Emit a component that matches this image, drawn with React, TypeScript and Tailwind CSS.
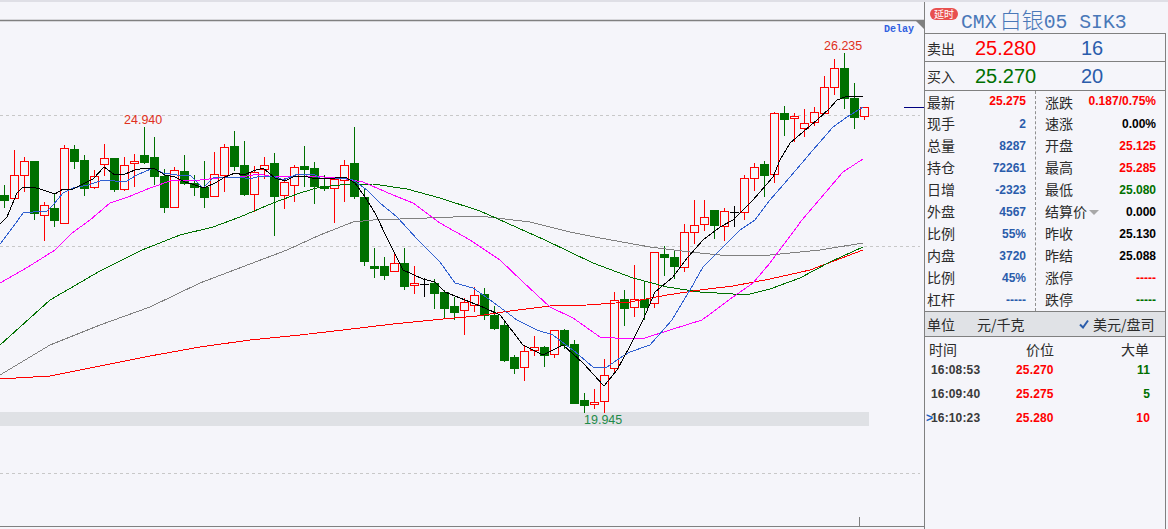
const RED = '#ff0000';
const GREEN = '#007000';

// type, high, body top, body bottom, low - one candle every 10px starting at x=4
type Candle = ['r' | 'g' | 'k', number, number, number, number];

const candles: Candle[] = [
  ['g', 185, 195, 200, 208], ['r', 150, 175, 198, 198], ['r', 157, 161, 175, 192], ['g', 161, 161, 213, 220],
  ['r', 202, 205, 215, 241], ['g', 193, 208, 220, 227], ['r', 145, 148, 223, 224], ['g', 145, 149, 161, 169],
  ['g', 155, 160, 188, 196], ['r', 170, 176, 187, 189], ['r', 144, 158, 164, 176], ['g', 158, 158, 189, 192],
  ['r', 157, 165, 189, 191], ['r', 154, 161, 163, 187], ['g', 127, 155, 162, 164], ['g', 137, 157, 176, 185],
  ['g', 169, 176, 207, 213], ['r', 167, 170, 207, 207], ['g', 155, 171, 183, 185], ['g', 175, 183, 187, 196],
  ['g', 161, 187, 197, 208], ['r', 152, 174, 196, 196], ['r', 144, 147, 175, 192], ['g', 131, 146, 166, 171],
  ['g', 141, 165, 194, 196], ['r', 166, 172, 194, 212], ['r', 157, 165, 169, 179], ['g', 153, 163, 196, 236],
  ['r', 178, 182, 195, 209], ['r', 165, 167, 185, 202], ['g', 146, 166, 169, 187], ['g', 162, 168, 186, 204],
  ['g', 175, 186, 188, 191], ['r', 178, 179, 188, 223], ['r', 160, 165, 180, 202], ['g', 127, 163, 196, 199],
  ['g', 188, 197, 261, 266], ['g', 248, 266, 268, 278], ['g', 257, 266, 275, 280], ['r', 252, 263, 271, 272],
  ['g', 248, 263, 286, 290], ['r', 266, 283, 285, 294], ['k', 278, 284, 284, 297], ['g', 279, 283, 293, 309],
  ['g', 290, 292, 308, 319], ['g', 297, 306, 312, 320], ['r', 298, 302, 310, 335], ['r', 287, 295, 305, 312],
  ['g', 288, 294, 315, 320], ['g', 306, 315, 328, 330], ['g', 322, 325, 360, 362], ['g', 355, 357, 368, 374],
  ['r', 345, 351, 367, 381], ['r', 336, 347, 350, 356], ['g', 346, 347, 355, 367], ['r', 330, 330, 354, 358],
  ['g', 329, 330, 345, 349], ['g', 340, 344, 403, 404], ['g', 393, 400, 405, 413], ['r', 389, 402, 404, 409],
  ['r', 359, 375, 401, 413], ['r', 292, 300, 368, 373], ['g', 290, 299, 308, 326], ['r', 265, 299, 307, 317],
  ['g', 282, 299, 307, 320], ['r', 252, 252, 303, 308], ['g', 246, 254, 257, 276], ['g', 251, 257, 266, 279],
  ['r', 224, 232, 267, 272], ['r', 200, 225, 232, 244], ['r', 200, 217, 224, 231], ['g', 210, 210, 225, 239],
  ['r', 208, 211, 226, 241], ['k', 206, 212, 212, 227], ['r', 175, 178, 212, 220], ['r', 163, 167, 178, 191],
  ['g', 161, 164, 175, 197], ['r', 112, 113, 174, 183], ['g', 106, 113, 119, 136], ['r', 113, 116, 118, 142],
  ['r', 109, 123, 128, 137], ['r', 107, 112, 122, 126], ['r', 76, 87, 113, 113], ['r', 59, 68, 87, 95],
  ['g', 53, 68, 98, 109], ['g', 83, 98, 117, 129], ['r', 107, 107, 116, 120],
];

const ma5 = '0,224 7,217 17,193 23,187 33,187 43,190 55,194 63,189 73,189 83,184 93,179 104,167 115,175 125,174 135,170 145,168 155,169 165,175 175,177 185,182 195,185 204,188 215,183 225,177 235,173 244,175 253,171 263,168 275,178 285,181 295,176 305,176 315,179 325,178 335,178 345,177 355,183 365,197 375,213 388,240 403,270 423,279 435,282 445,292 465,300 485,308 500,315 510,328 523,345 543,355 563,345 583,363 604,386 617,370 630,346 643,320 655,292 673,277 688,257 703,240 720,227 733,220 753,200 773,177 780,160 790,143 803,132 817,120 830,108 837,100 845,97 863,96';
const ma10 = '0,244 13,227 23,213 33,212 47,211 53,205 63,193 73,188 88,185 103,180 115,181 125,182 137,175 153,168 163,173 177,175 190,175 203,188 213,178 227,177 240,177 250,179 260,176 273,176 283,180 298,174 313,174 320,178 340,178 353,180 367,190 380,203 397,217 418,240 440,262 455,283 473,288 493,302 517,320 537,330 553,335 573,350 593,367 607,367 620,358 630,352 650,345 672,320 690,290 703,267 720,250 740,230 755,220 770,200 790,177 813,150 833,127 847,117 863,107';
const ma20 = '0,283 28,267 55,250 72,233 90,220 110,203 128,197 150,188 173,180 200,180 227,177 240,177 260,174 273,177 307,176 340,178 363,182 393,195 413,203 440,223 470,240 500,260 523,282 550,307 573,318 600,337 630,339 645,338 670,330 702,320 733,297 753,283 770,263 802,220 843,172 863,159';
const ma30 = '0,345 50,300 100,271 142,250 180,235 213,227 240,217 273,203 300,193 320,187 340,185 373,184 407,189 440,198 480,211 545,240 593,263 633,278 667,287 700,292 733,294 750,294 770,289 800,278 830,262 863,247';
const ma60 = '0,375 50,345 100,325 150,307 200,283 250,264 287,250 320,235 353,222 373,220 427,218 480,216 530,222 570,232 600,238 650,247 690,252 720,255 770,255 820,250 863,243';
const ma120 = '0,379 50,376 100,366 150,356 200,347 250,340 300,335 360,328 393,324 443,319 477,316 510,311 550,306 587,305 630,302 667,295 700,290 733,286 770,279 810,270 863,250';

function Chart() {
  return (
    <svg viewBox="0 2 924 527" width={924} height={527} className="block">
      <g stroke="#c8c8c8" strokeDasharray="3 3" shapeRendering="crispEdges">
        <line x1="0" x2="920" y1="115.5" y2="115.5" />
        <line x1="0" x2="920" y1="246.5" y2="246.5" />
        <line x1="0" x2="920" y1="473.5" y2="473.5" />
      </g>
      <rect x="0" y="412" width="869" height="14" fill="#dfe1e5" />
      <line x1="0" x2="924" y1="20.5" y2="20.5" stroke="#808080" strokeWidth="1.4" />
      <polygon points="915,20 924,20 924,29" fill="#808080" />
      <line x1="0" x2="924" y1="526.5" y2="526.5" stroke="#808080" strokeWidth="1.2" />
      <line x1="859.5" x2="859.5" y1="517" y2="526" stroke="#808080" />
      <line x1="904" x2="924" y1="107.5" y2="107.5" stroke="#000080" />
      <g shapeRendering="crispEdges">
        {candles.map((c, i) => {
          const [type, high, top, bottom, low] = c;
          const x = 4 + i * 10;
          const color = type === 'r' ? RED : type === 'g' ? GREEN : '#000000';
          return (
            <g key={i}>
              <line x1={x + 0.5} x2={x + 0.5} y1={high} y2={top} stroke={color} />
              <line x1={x + 0.5} x2={x + 0.5} y1={bottom} y2={low} stroke={color} />
              {type === 'g' && <rect x={x - 4} y={top} width={9} height={bottom - top + 1} fill={color} />}
              {type === 'r' && (
                <rect x={x - 3.5} y={top + 0.5} width={8} height={bottom - top} fill="#f5f5fa" stroke={color} />
              )}
              {type === 'k' && <line x1={x - 4} x2={x + 5} y1={top + 0.5} y2={top + 0.5} stroke={color} />}
            </g>
          );
        })}
      </g>
      <g fill="none" shapeRendering="crispEdges">
        <polyline points={ma120} stroke="#ff0000" />
        <polyline points={ma60} stroke="#808080" />
        <polyline points={ma30} stroke="#007000" />
        <polyline points={ma20} stroke="#ff00ff" />
        <polyline points={ma10} stroke="#3060d0" />
        <polyline points={ma5} stroke="#000000" />
      </g>
    </svg>
  );
}

const leftRows = [
  ['最新', '25.275', 'text-[#ff0000]'],
  ['现手', '2', 'text-[#2a5cab]'],
  ['总量', '8287', 'text-[#2a5cab]'],
  ['持仓', '72261', 'text-[#2a5cab]'],
  ['日增', '-2323', 'text-[#2a5cab]'],
  ['外盘', '4567', 'text-[#2a5cab]'],
  ['比例', '55%', 'text-[#2a5cab]'],
  ['内盘', '3720', 'text-[#2a5cab]'],
  ['比例', '45%', 'text-[#2a5cab]'],
  ['杠杆', '-----', 'text-[#2a5cab]'],
];

const rightRows = [
  ['涨跌', '0.187/0.75%', 'text-[#ff0000]'],
  ['速涨', '0.00%', 'text-black'],
  ['开盘', '25.125', 'text-[#ff0000]'],
  ['最高', '25.285', 'text-[#ff0000]'],
  ['最低', '25.080', 'text-[#007000]'],
  ['结算价', '0.000', 'text-black'],
  ['昨收', '25.130', 'text-black'],
  ['昨结', '25.088', 'text-black'],
  ['涨停', '-----', 'text-[#ff0000]'],
  ['跌停', '-----', 'text-[#007000]'],
];

const ticks = [
  ['16:08:53', '25.270', '11', 'text-[#007000]'],
  ['16:09:40', '25.275', '5', 'text-[#007000]'],
  ['16:10:23', '25.280', '10', 'text-[#ff0000]'],
];

const cjk = "font-['Noto_Sans_CJK_SC','Noto_Sans',sans-serif]";
const num = "font-['Liberation_Sans',Arial,sans-serif]";

function StatRow({ label, value, color, first, arrow }: { label: string; value: string; color: string; first: boolean; arrow?: boolean }) {
  return (
    <div className="flex h-[22px] items-center justify-between">
      <span className={`${cjk} flex items-center text-[14px] leading-none text-[#2b2b2b] ${first ? '' : '-translate-y-px'}`}>
        {label}
        {arrow && <span className="ml-[2px] mt-[3px] h-0 w-0 border-x-[5px] border-t-[5px] border-x-transparent border-t-[#a8a8a8]" />}
      </span>
      <span className={`${num} text-[12px] font-bold leading-none ${color} ${first ? '-translate-y-px' : ''}`}>{value}</span>
    </div>
  );
}

function QuoteRow({ label, price, size, color, height }: { label: string; price: string; size: string; color: string; height: string }) {
  return (
    <div className={`flex items-center pl-[2px] ${height}`}>
      <span className={`${cjk} w-[48px] text-[14px] leading-none text-[#2b2b2b]`}>{label}</span>
      <span className={`${num} w-[106px] text-[20px] leading-none ${color}`}>{price}</span>
      <span className={`${num} text-[20px] leading-none text-[#2a5cab]`}>{size}</span>
    </div>
  );
}

export default function App() {
  return (
    <div className="h-[529px] w-[1168px] overflow-hidden bg-[#f5f5fa]">
      <div className="h-[2px] bg-[#dfdfe6]" />
      <div className="flex h-[527px]">
        {/* chart */}
        <div className={`${num} relative w-[924px] shrink-0`}>
          <Chart />
          <span className="absolute left-[124px] top-[112px] text-[12.5px] leading-none text-[#e03020]">24.940</span>
          <span className="absolute left-[824px] top-[38px] text-[12.5px] leading-none text-[#e03020]">26.235</span>
          <span className="absolute left-[584px] top-[412px] text-[12.5px] leading-none text-[#1f8a4a]">19.945</span>
          <span className="absolute left-[884px] top-[23px] font-['Liberation_Mono',monospace] text-[10px] font-bold leading-none text-[#3060e0]">Delay</span>
        </div>

        {/* quote panel */}
        <div className="flex w-[242px] shrink-0 flex-col border-l border-[#808080]">
          <div className="flex h-[31px] items-start pl-[5px] pt-[6px]">
            <span className={`${cjk} flex h-[12px] w-[28px] items-center justify-center rounded-full bg-[#e8504f] text-[10px] leading-none text-white`}>延时</span>
            <span className="ml-[3px] -mt-[1px] block whitespace-pre font-['Liberation_Mono',monospace] text-[19.8px] leading-[26px] text-[#4a78b8]">
              CMX<span className={`${cjk} ml-[3px] text-[22px] font-light leading-none`}>白银</span>05 SIK3
            </span>
          </div>
          <div className="flex flex-1 flex-col border-r border-t border-[#808080]">
            <div className="border-b border-[#808080]">
              <QuoteRow label="卖出" price="25.280" size="16" color="text-[#ff0000]" height="h-[27px]" />
            </div>
            <div className="border-b border-[#808080]">
              <QuoteRow label="买入" price="25.270" size="20" color="text-[#007000]" height="h-[28px]" />
            </div>
            <div className="flex border-b border-[#808080]">
              <div className="w-[111px] border-r border-dashed border-[#909090] pl-[2px] pr-[9px]">
                {leftRows.map((r, i) => (
                  <StatRow key={r[0] + r[1]} label={r[0]} value={r[1]} color={r[2]} first={i === 0} />
                ))}
              </div>
              <div className="flex-1 pl-[9px] pr-[9px]">
                {rightRows.map((r, i) => (
                  <StatRow key={r[0]} label={r[0]} value={r[1]} color={r[2]} first={i === 0} arrow={r[0] === '结算价'} />
                ))}
              </div>
            </div>
            <div className={`${cjk} flex h-[25px] items-center border-b border-[#808080] bg-[#e0e2e6] pl-[2px] text-[14px] leading-none text-[#2b2b2b]`}>
              <span className="w-[50px]">单位</span>
              <span className="w-[102px]">元/千克</span>
              <svg width="10" height="10" viewBox="0 0 10 10" className="mr-[4px]">
                <path d="M1 5.5 L4 8.5 L9 1.5" fill="none" stroke="#2a5cab" strokeWidth="2" />
              </svg>
              <span>美元/盘司</span>
            </div>
            <div className={`${cjk} flex h-[21px] items-start justify-between pl-[4px] pr-[16px] pt-[5px] text-[14px] leading-none text-[#2b2b2b]`}>
              <span>时间</span>
              <span className="ml-[2px]">价位</span>
              <span>大单</span>
            </div>
            {ticks.map((t, i) => (
              <div key={t[0]} className={`${num} relative flex h-[24px] items-center pl-[6px] pr-[15px] text-[12px] font-bold leading-none tracking-[0.15px]`}>
                {i === 2 && <span className="absolute left-[1px] text-[#2060c0]">&gt;</span>}
                <span className="w-[85px] text-[#3a3a3a]">{t[0]}</span>
                <span className="text-[#ff0000]">{t[1]}</span>
                <span className={`ml-auto ${t[3]}`}>{t[2]}</span>
              </div>
            ))}
          </div>
        </div>
      </div>
    </div>
  );
}
